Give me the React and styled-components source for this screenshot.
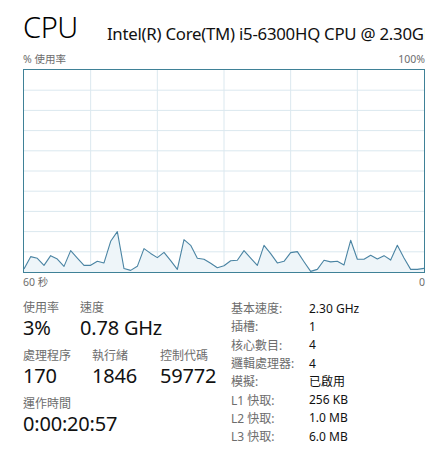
import React from "react";
import styled, { createGlobalStyle } from "styled-components";

const Global = createGlobalStyle`
  html, body { margin: 0; padding: 0; background: #ffffff; }
  body { font-family: "Noto Sans", "Noto Sans CJK TC", sans-serif; color: #000; }
`;

const usage = [
  1.5, 7.6, 6.8, 3.3, 8.1, 6.4, 2.8, 10.6, 6.9, 3.3, 3.3, 5.3, 4.5, 15.2, 20.0,
  1.7, 0.8, 2.8, 11.6, 9.2, 7.1, 9.7, 5.6, 1.3, 16.0, 13.2, 6.8, 6.3, 4.3, 2.1,
  3.1, 5.6, 5.8, 10.6, 6.9, 3.3, 13.2, 9.1, 4.5, 5.3, 9.6, 10.1, 5.1, 0.3, 1.3,
  5.8, 5.0, 5.3, 3.5, 15.7, 6.3, 6.3, 8.3, 6.4, 8.1, 5.9, 13.2, 6.9, 1.3, 1.3, 1.8,
];

const Page = styled.div`
  width: 402px;
  padding: 12px 0 0 23px;
`;

const Header = styled.div`
  display: flex;
  align-items: flex-end;
  height: 30px;
  white-space: nowrap;
`;

const Title = styled.div`
  font-size: 29px;
  font-weight: 300;
  line-height: 30px;
  letter-spacing: -0.4px;
  flex: none;
`;

const Model = styled.div`
  font-size: 16.8px;
  font-weight: 400;
  line-height: 22px;
  margin-left: 29px;
  margin-bottom: -3px;
  color: #111;
  letter-spacing: -0.25px;
  overflow: hidden;
  min-width: 0;
`;

const AxisRow = styled.div`
  display: flex;
  justify-content: space-between;
  font-size: 10.5px;
  color: #6d6d6d;
  height: ${(p) => p.$h || 15}px;
  line-height: 15px;
  margin-top: ${(p) => p.$top || 0}px;
`;

const ChartBox = styled.div`
  box-sizing: border-box;
  width: 402px;
  height: 204px;
  border: 1px solid #3f8197;
  background: #ffffff;
  svg { display: block; width: 100%; height: 100%; }
`;

const Stats = styled.div`
  display: flex;
  margin-top: 10px;
`;

const LeftStats = styled.div`
  width: 208px;
  display: flex;
  flex-direction: column;
  gap: 8px;
`;

const StatRow = styled.div`
  display: flex;
`;

const Stat = styled.div`
  display: flex;
  flex-direction: column;
  min-width: ${(p) => p.$w || 0}px;
`;

const Label = styled.div`
  font-size: 12px;
  line-height: 15px;
  margin-bottom: 1px;
  color: #6d6d6d;
`;

const Value = styled.div`
  font-size: 20px;
  line-height: 24px;
  font-weight: 400;
  color: #111;
  letter-spacing: -0.2px;
`;

const Table = styled.div`
  display: grid;
  grid-template-columns: 78px auto;
  grid-auto-rows: 18.3px;
  align-items: center;
  margin-top: -1px;
  font-size: 12px;
`;

const TLabel = styled.div`
  color: #6d6d6d;
`;

const TValue = styled.div`
  color: #111;
`;

function Chart() {
  const W = 400;
  const H = 202;
  const pts = usage.map((u, i) => [(i * W) / (usage.length - 1), H - (u / 100) * H]);
  const line = pts.map((p) => `${p[0].toFixed(2)},${p[1].toFixed(2)}`).join(" ");
  const area = `0,${H} ${line} ${W},${H}`;
  const vLines = [1, 2, 3, 4, 5].map((k) => (k * W) / 6);
  const hLines = [1, 2, 3, 4, 5, 6, 7, 8, 9].map((k) => (k * H) / 10);
  return (
    <svg viewBox={`0 0 ${W} ${H}`} preserveAspectRatio="none">
      {hLines.map((y) => (
        <line key={"h" + y} x1="0" x2={W} y1={y} y2={y} stroke="#dbe8ef" strokeWidth="1" />
      ))}
      {vLines.map((x) => (
        <line key={"v" + x} x1={x} x2={x} y1="0" y2={H} stroke="#dbe8ef" strokeWidth="1" />
      ))}
      <polygon points={area} fill="#eef5f9" />
      <polyline points={line} fill="none" stroke="#4a84a3" strokeWidth="1.1" strokeLinejoin="round" />
    </svg>
  );
}

const specs = [
  ["基本速度:", "2.30 GHz"],
  ["插槽:", "1"],
  ["核心數目:", "4"],
  ["邏輯處理器:", "4"],
  ["模擬:", "已啟用"],
  ["L1 快取:", "256 KB"],
  ["L2 快取:", "1.0 MB"],
  ["L3 快取:", "6.0 MB"],
];

export default function App() {
  return (
    <>
      <Global />
      <Page>
        <Header>
          <Title>CPU</Title>
          <Model>Intel(R) Core(TM) i5-6300HQ CPU @ 2.30GHz</Model>
        </Header>
        <AxisRow $top={10} $h={17}>
          <span>% 使用率</span>
          <span>100%</span>
        </AxisRow>
        <ChartBox>
          <Chart />
        </ChartBox>
        <AxisRow $top={2}>
          <span>60 秒</span>
          <span>0</span>
        </AxisRow>
        <Stats>
          <LeftStats>
            <StatRow>
              <Stat $w={57}>
                <Label>使用率</Label>
                <Value>3%</Value>
              </Stat>
              <Stat>
                <Label>速度</Label>
                <Value>0.78 GHz</Value>
              </Stat>
            </StatRow>
            <StatRow>
              <Stat $w={69}>
                <Label>處理程序</Label>
                <Value>170</Value>
              </Stat>
              <Stat $w={68}>
                <Label>執行緒</Label>
                <Value>1846</Value>
              </Stat>
              <Stat>
                <Label>控制代碼</Label>
                <Value>59772</Value>
              </Stat>
            </StatRow>
            <StatRow>
              <Stat>
                <Label>運作時間</Label>
                <Value>0:00:20:57</Value>
              </Stat>
            </StatRow>
          </LeftStats>
          <Table>
            {specs.map(([k, v]) => (
              <React.Fragment key={k}>
                <TLabel>{k}</TLabel>
                <TValue>{v}</TValue>
              </React.Fragment>
            ))}
          </Table>
        </Stats>
      </Page>
    </>
  );
}
